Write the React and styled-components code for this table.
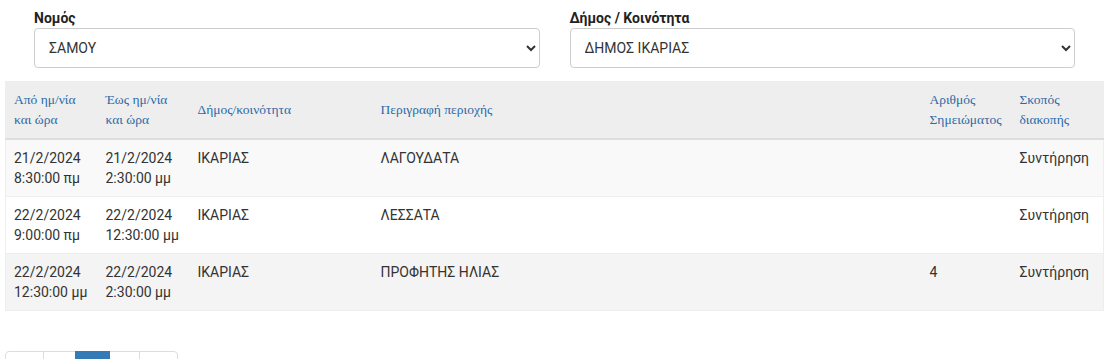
import React from "react";
import styled, { createGlobalStyle } from "styled-components";

const Global = createGlobalStyle`
  html, body { margin: 0; padding: 0; overflow: hidden; background: #fff; }
  body { font-family: Roboto, "Noto Sans", sans-serif; font-size: 14px; color: #333; }
  * { box-sizing: border-box; }
`;

const Page = styled.div`
  padding: 8px 4px 0 5px;
`;

const FilterRow = styled.div`
  display: grid;
  grid-template-columns: 1fr 1fr;
  column-gap: 30px;
  margin: 0 28px 0 29px;
`;

const Field = styled.div`
  display: flex;
  flex-direction: column;
`;

const Label = styled.label`
  font-family: Roboto, sans-serif;
  font-weight: 700;
  font-size: 14px;
  line-height: 20px;
  color: #222;
`;

const Select = styled.select`
  height: 40px;
  width: 100%;
  padding: 0 10px;
  border: 1px solid #ccc;
  border-radius: 4px;
  background: #fff;
  font-family: Roboto, sans-serif;
  font-size: 14px;
  color: #333;
`;

const Table = styled.table`
  margin-top: 13px;
  width: 100%;
  table-layout: fixed;
  border-collapse: collapse;
  border: 1px solid #eee;
`;

const Th = styled.th`
  background: #eee;
  padding: 8px;
  text-align: left;
  vertical-align: middle;
  font-family: "Liberation Serif", serif;
  font-weight: 400;
  font-size: 13.5px;
  line-height: 20px;
  color: #2b6aa8;
  border-bottom: 2px solid #ddd;
`;

const Tr = styled.tr`
  background: ${(p) => p.$bg};
`;

const Td = styled.td`
  padding: 8px;
  vertical-align: top;
  line-height: 20px;
  font-size: 14px;
  color: #333;
  border-top: 1px solid #eee;
`;

const Pagination = styled.ul`
  display: flex;
  list-style: none;
  margin: 40px 0 0;
  padding: 0;
`;

const PageItem = styled.li`
  width: ${(p) => p.$w}px;
  margin-left: -1px;
  padding: 8px 0 6px;
  text-align: center;
  line-height: 20px;
  border: 1px solid ${(p) => (p.$active ? "#337ab7" : "#ddd")};
  background: ${(p) => (p.$active ? "#337ab7" : "#fff")};
  color: ${(p) => (p.$active ? "#fff" : "#337ab7")};
  position: relative;
  z-index: ${(p) => (p.$active ? 1 : 0)};
  &:first-child { margin-left: 0; border-radius: 4px 0 0 4px; }
  &:last-child { border-radius: 0 4px 4px 0; }
`;

const cols = [92, 92, 183, 549, 90, 92];

const rows = [
  { from: ["21/2/2024", "8:30:00 πμ"], to: ["21/2/2024", "2:30:00 μμ"], dim: "ΙΚΑΡΙΑΣ", area: "ΛΑΓΟΥΔΑΤΑ", num: "", reason: "Συντήρηση", bg: "#f9f9f9" },
  { from: ["22/2/2024", "9:00:00 πμ"], to: ["22/2/2024", "12:30:00 μμ"], dim: "ΙΚΑΡΙΑΣ", area: "ΛΕΣΣΑΤΑ", num: "", reason: "Συντήρηση", bg: "#fff" },
  { from: ["22/2/2024", "12:30:00 μμ"], to: ["22/2/2024", "2:30:00 μμ"], dim: "ΙΚΑΡΙΑΣ", area: "ΠΡΟΦΗΤΗΣ ΗΛΙΑΣ", num: "4", reason: "Συντήρηση", bg: "#f4f4f4" },
];

const pages = [
  { t: "«", w: 39 },
  { t: "1", w: 33 },
  { t: "2", w: 35, active: true },
  { t: "3", w: 31 },
  { t: "»", w: 39 },
];

export default function App() {
  return (
    <Page>
      <Global />
      <FilterRow>
        <Field>
          <Label>Νομός</Label>
          <Select defaultValue="ΣΑΜΟΥ">
            <option>ΣΑΜΟΥ</option>
          </Select>
        </Field>
        <Field>
          <Label>Δήμος / Κοινότητα</Label>
          <Select defaultValue="ΔΗΜΟΣ ΙΚΑΡΙΑΣ">
            <option>ΔΗΜΟΣ ΙΚΑΡΙΑΣ</option>
          </Select>
        </Field>
      </FilterRow>
      <Table>
        <colgroup>
          {cols.map((w, i) => (
            <col key={i} style={{ width: w }} />
          ))}
        </colgroup>
        <thead>
          <tr>
            <Th>Από ημ/νία<br />και ώρα</Th>
            <Th>Έως ημ/νία<br />και ώρα</Th>
            <Th>Δήμος/κοινότητα</Th>
            <Th>Περιγραφή περιοχής</Th>
            <Th>Αριθμός<br />Σημειώματος</Th>
            <Th>Σκοπός<br />διακοπής</Th>
          </tr>
        </thead>
        <tbody>
          {rows.map((r, i) => (
            <Tr key={i} $bg={r.bg}>
              <Td>{r.from[0]}<br />{r.from[1]}</Td>
              <Td>{r.to[0]}<br />{r.to[1]}</Td>
              <Td>{r.dim}</Td>
              <Td>{r.area}</Td>
              <Td>{r.num}</Td>
              <Td>{r.reason}</Td>
            </Tr>
          ))}
        </tbody>
      </Table>
      <Pagination>
        {pages.map((p, i) => (
          <PageItem key={i} $w={p.w} $active={p.active}>{p.t}</PageItem>
        ))}
      </Pagination>
    </Page>
  );
}
